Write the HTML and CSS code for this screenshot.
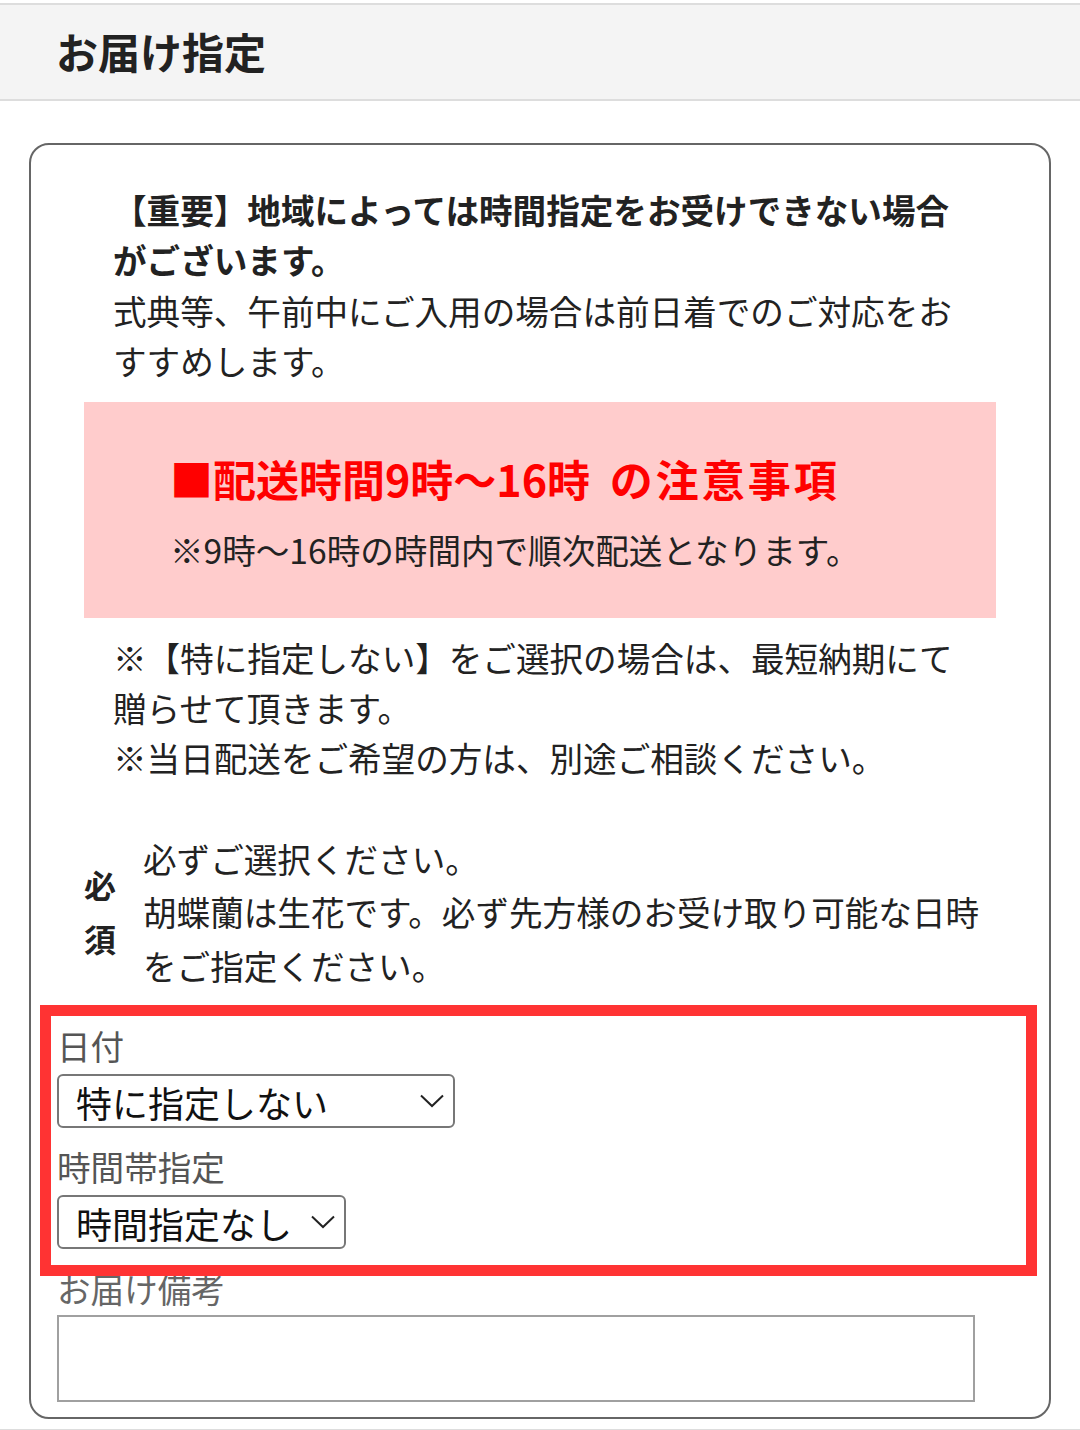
FILE: index.html
```html
<!DOCTYPE html>
<html lang="ja">
<head>
    <meta charset="UTF-8">
    <meta name="viewport" content="width=device-width, initial-scale=1.0">
    <title>お届け指定</title>
    <link rel="stylesheet" href="styles.css">
</head>
<body>
    <h2 class="sec-title">お届け指定</h2>
    <div class="card">
        <p class="lead">
            <strong>【重要】地域によっては時間指定をお受けできない場合がございます。</strong><br>
            式典等、午前中にご入用の場合は前日着でのご対応をおすすめします。
        </p>
        <div class="notice">
            <p class="notice-title">■配送時間9時〜16時&nbsp;&nbsp;<span class="wide">の注意事項</span></p>
            <p class="notice-text">※9時〜16時の時間内で順次配送となります。</p>
        </div>
        <p class="lead lead-2">
            ※【特に指定しない】をご選択の場合は、最短納期にて贈らせて頂きます。<br>
            ※当日配送をご希望の方は、別途ご相談ください。
        </p>
        <div class="required">
            <span class="req-mark">必須</span>
            <p>必ずご選択ください。<br>胡蝶蘭は生花です。必ず先方様のお受け取り可能な日時をご指定ください。</p>
        </div>
        <div class="fields">
            <label class="field-label" for="date">日付</label>
            <div class="select-wrap date">
                <select id="date" class="select">
                    <option>特に指定しない</option>
                </select>
                <svg class="chevron" width="24" height="14" viewBox="0 0 24 14"><path d="M1 1.5 L12 12 L23 1.5" fill="none" stroke="#222" stroke-width="2"/></svg>
            </div>
            <label class="field-label field-gap" for="time">時間帯指定</label>
            <div class="select-wrap time">
                <select id="time" class="select">
                    <option>時間指定なし</option>
                </select>
                <svg class="chevron" width="24" height="14" viewBox="0 0 24 14"><path d="M1 1.5 L12 12 L23 1.5" fill="none" stroke="#222" stroke-width="2"/></svg>
            </div>
        </div>
        <label class="field-label memo-label" for="memo">お届け備考</label>
        <textarea id="memo" class="memo"></textarea>
    </div>
    <div class="sec-title next"></div>
</body>
</html>
```

FILE: styles.css
```css
*{
    margin: 0;
    padding: 0;
    box-sizing: border-box;
}
body{
    font-family: "Noto Sans CJK JP", "Noto Sans", sans-serif;
    color: #222;
    background: #fff;
    font-size: 33.6px;
    line-height: 1.5;
}

/* 見出しバー */
.sec-title{
    margin-top: 3px;
    height: 98px;
    padding-left: 56px;
    background: #f4f4f4;
    border-top: 2px solid #ddd;
    border-bottom: 2px solid #ddd;
    font-size: 42px;
    font-weight: bold;
    line-height: 92px;
    color: #222;
}
.sec-title.next{
    margin-top: 10px;
}

.card{
    margin: 42px 29px 0;
    padding: 40px 26px 15px;
    border: 2px solid #666;
    border-radius: 20px;
}

.lead{
    padding: 0 56px;
}
.lead strong{
    font-weight: bold;
}
.lead-2{
    margin-top: 15px;
}

/* ピンクの注意枠 */
.notice{
    margin: 15px 27px 0;
    padding: 44px 0 43px 86px;
    background: #ffcccc;
}
.notice-title{
    font-size: 43px;
    font-weight: bold;
    color: #ff0000;
    line-height: 64px;
}
.notice-title .wide{
    letter-spacing: 3px;
}
.notice-text{
    margin-top: 15px;
    line-height: 50px;
}

.required{
    display: flex;
    align-items: center;
    margin: 48px 27px 0;
    line-height: 53.5px;
}
.req-mark{
    flex: 0 0 34px;
    width: 34px;
    margin-right: 25px;
    font-size: 32px;
    font-weight: bold;
}

/* 日付・時間帯 */
.fields{
    position: relative;
    margin-top: 29px;
}
.fields::after{
    content: "";
    position: absolute;
    top: -16px;
    left: -17px;
    right: -14px;
    bottom: -27px;
    border: 11px solid #ff3333;
    z-index: 2;
    pointer-events: none;
}
.field-label{
    display: block;
    color: #555;
    line-height: 50px;
}
.field-gap{
    margin-top: 14px;
}
.select-wrap{
    position: relative;
    margin-top: 3px;
}
.select-wrap.date{
    width: 398px;
}
.select-wrap.time{
    width: 289px;
}
.select{
    display: block;
    width: 100%;
    height: 54px;
    padding: 0 0 0 17px;
    border: 2px solid #777;
    border-radius: 6px;
    background: #fff;
    font-family: inherit;
    font-size: 36px;
    color: #111;
    appearance: none;
    -webkit-appearance: none;
}
.chevron{
    position: absolute;
    right: 11px;
    top: 20px;
}

.memo-label{
    margin-top: 15px;
    color: #666;
}
.memo{
    display: block;
    width: 918px;
    height: 87px;
    margin-top: 1px;
    border: 2px solid #a0a0a0;
    border-radius: 0;
    resize: none;
    font-family: inherit;
}
```
